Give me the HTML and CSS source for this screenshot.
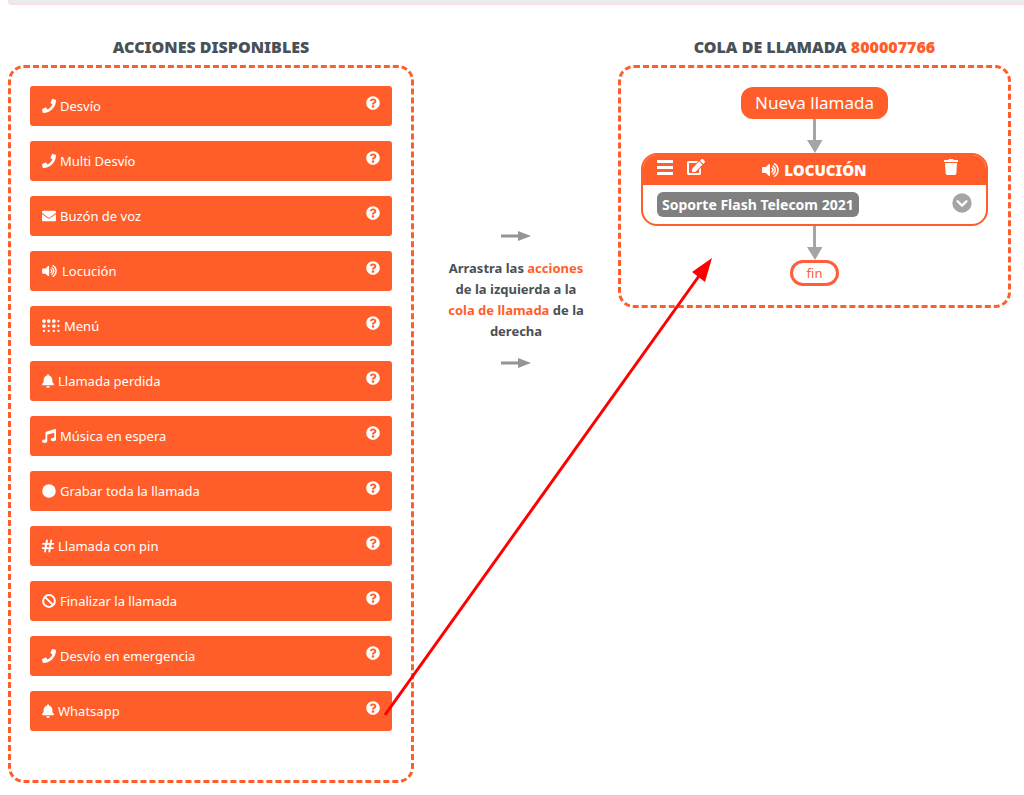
FILE: index.html
```html
<!DOCTYPE html>
<html lang="es">
<head>
<meta charset="utf-8">
<meta name="viewport" content="width=device-width, initial-scale=1">
<title>Cola de llamada</title>
<link rel="stylesheet" href="styles.css">
</head>
<body>
<svg class="sprite" aria-hidden="true">
  <symbol id="phone" viewBox="0 0 512 512"><path d="M493.4 24.6l-104-24c-11.3-2.6-22.9 3.3-27.5 13.9l-48 112c-4.2 9.8-1.4 21.3 6.9 28l60.6 49.6c-36 76.7-98.9 140.5-177.2 177.2l-49.6-60.6c-6.8-8.3-18.2-11.1-28-6.9l-112 48C3.9 366.5-2 378.1.6 389.4l24 104C27.1 504.2 36.7 512 48 512c256.1 0 464-207.5 464-464 0-11.2-7.7-20.9-18.6-23.4z"/></symbol>
  <symbol id="envelope" viewBox="0 0 512 512"><path d="M502.3 190.8c3.9-3.1 9.7-.2 9.7 4.7V400c0 26.5-21.5 48-48 48H48c-26.5 0-48-21.5-48-48V195.6c0-5 5.7-7.8 9.7-4.7 22.4 17.4 52.1 39.5 154.1 113.6 21.1 15.4 56.7 47.8 92.2 47.6 35.7.3 72-32.8 92.3-47.6 102-74.1 131.6-96.3 154-113.7zM256 320c23.2.4 56.6-29.2 73.4-41.4 132.7-96.3 142.8-104.7 173.4-128.7 5.8-4.5 9.2-11.5 9.2-18.9v-19c0-26.5-21.5-48-48-48H48c-26.5 0-48 21.5-48 48v19c0 7.4 3.4 14.3 9.2 18.9 30.6 23.9 40.7 32.4 173.4 128.7 16.8 12.2 50.2 41.8 73.4 41.4z"/></symbol>
  <symbol id="volume" viewBox="0 0 576 512"><path d="M215 71l-89 89H24c-13.300 0-24 10.700-24 24v144c0 13.300 10.700 24 24 24h102l89 89c15 15 41 4.500 41-17V88c0-21.500-26-32-41-17z"/><path d="M322 200c42 24 42 88 0 112M356 129c92 56 92 198 0 254M400 59c147 90 147 304 0 394" fill="none" stroke="currentColor" stroke-width="50" stroke-linecap="round"/></symbol>
  <symbol id="braille" viewBox="0 0 640 512"><circle cx="64" cy="76" r="68"/><circle cx="64" cy="256" r="68"/><circle cx="64" cy="436" r="42"/><circle cx="236" cy="76" r="68"/><circle cx="236" cy="256" r="42"/><circle cx="236" cy="436" r="42"/><circle cx="424" cy="76" r="68"/><circle cx="424" cy="256" r="68"/><circle cx="424" cy="436" r="42"/><circle cx="590" cy="76" r="42"/><circle cx="590" cy="256" r="42"/><circle cx="590" cy="436" r="42"/></symbol>
  <symbol id="bell" viewBox="0 0 448 512"><path d="M224 512c35.320 0 63.970-28.650 63.970-64H160.030c0 35.350 28.650 64 63.970 64zm215.390-149.710c-19.320-20.760-55.470-51.990-55.470-154.290 0-77.700-54.480-139.900-127.940-155.160V32c0-17.670-14.320-32-31.980-32s-31.980 14.330-31.980 32v20.840C118.560 68.100 64.080 130.300 64.080 208c0 102.300-36.150 133.530-55.470 154.290-6 6.450-8.660 14.160-8.610 21.710.11 16.400 12.980 32 32.100 32h383.800c19.120 0 32-15.600 32.100-32 .05-7.550-2.610-15.270-8.610-21.710z"/></symbol>
  <symbol id="music" viewBox="0 0 512 512"><path d="M511.990 32.010c0-21.710-21.100-37.010-41.600-30.510L150.400 96c-13.300 4.200-22.400 16.500-22.400 30.500v261.420c-10.050-2.380-20.720-3.920-32-3.920-53.020 0-96 28.650-96 64s42.980 64 96 64 96-28.650 96-64V214.310l256-75.020v184.630c-10.050-2.380-20.720-3.920-32-3.920-53.020 0-96 28.650-96 64s42.980 64 96 64 96-28.650 96-64z"/></symbol>
  <symbol id="circle" viewBox="0 0 512 512"><circle cx="256" cy="256" r="248"/></symbol>
  <symbol id="hashtag" viewBox="0 0 448 512"><path d="M184 52L112 460M344 52L272 460M42 176H428M20 336H406" fill="none" stroke="currentColor" stroke-width="72" stroke-linecap="round"/></symbol>
  <symbol id="ban" viewBox="0 0 512 512"><path d="M256 40a216 216 0 1 0 0 432a216 216 0 1 0 0-432zM104 104L408 408" fill="none" stroke="currentColor" stroke-width="72"/></symbol>
  <symbol id="question" viewBox="0 0 512 512"><path d="M504 256c0 136.997-111.043 248-248 248S8 392.997 8 256C8 119.083 119.043 8 256 8s248 111.083 248 248zM262.655 90c-54.497 0-89.255 22.957-116.549 63.758-3.536 5.286-2.353 12.415 2.715 16.258l34.699 26.310c5.205 3.947 12.621 3.008 16.665-2.122 17.864-22.658 30.113-35.797 57.303-35.797 20.429 0 45.698 13.148 45.698 32.958 0 14.976-12.363 22.667-32.534 33.976C247.128 238.528 216 254.941 216 296v4c0 6.627 5.373 12 12 12h56c6.627 0 12-5.373 12-12v-1.333c0-28.462 83.186-29.647 83.186-106.667 0-58.002-60.165-102-116.531-102zM256 338c-25.365 0-46 20.635-46 46 0 25.364 20.635 46 46 46s46-20.636 46-46c0-25.365-20.635-46-46-46z"/></symbol>
  <symbol id="bars" viewBox="0 0 16 16"><path d="M0 1H16V4H0zM0 7H16V10H0zM0 13H16V16H0z"/></symbol>
  <symbol id="edit" viewBox="0 0 576 512"><path d="M402.600 83.200l90.200 90.200c3.800 3.800 3.800 10 0 13.800L274.400 405.600l-92.800 10.300c-12.400 1.400-22.900-9.100-21.500-21.500l10.300-92.800L388.800 83.200c3.800-3.800 10-3.800 13.800 0zm162-22.900l-48.800-48.800c-15.200-15.200-39.900-15.200-55.200 0l-35.400 35.400c-3.800 3.800-3.800 10 0 13.800l90.200 90.200c3.800 3.800 10 3.800 13.800 0l35.400-35.400c15.200-15.300 15.200-40 0-55.200zM384 346.200V448H64V128h229.800c3.200 0 6.200-1.300 8.500-3.500l40-40c7.600-7.600 2.200-20.500-8.500-20.500H48C21.500 64 0 85.500 0 112v352c0 26.500 21.500 48 48 48h352c26.500 0 48-21.500 48-48V306.200c0-10.700-12.900-16-20.500-8.500l-40 40c-2.200 2.300-3.500 5.300-3.500 8.500z"/></symbol>
  <symbol id="trash" viewBox="0 0 448 512"><path d="M432 32H312l-9.400-18.700A24 24 0 0 0 281.100 0H166.800a23.720 23.720 0 0 0-21.400 13.300L136 32H16A16 16 0 0 0 0 48v32a16 16 0 0 0 16 16h416a16 16 0 0 0 16-16V48a16 16 0 0 0-16-16zM53.200 467a48 48 0 0 0 47.900 45h245.800a48 48 0 0 0 47.900-45L416 128H32z"/></symbol>
  <symbol id="chevron" viewBox="0 0 512 512"><circle cx="256" cy="256" r="248"/><path d="M142 212L256 322L370 212" fill="none" stroke="#fff" stroke-width="60" stroke-linecap="round" stroke-linejoin="round"/></symbol>
  <symbol id="arrow-right" viewBox="0 0 30 12"><path d="M0 4.500H17V1L30 6L17 11V7.500H0z"/></symbol>
  <symbol id="arrow-down" viewBox="0 0 16 34"><path d="M6 0H9V21H15.500L8 34L0 21H6z"/></symbol>
</svg>

<div class="notice"></div>
<main class="board">
  <section class="column">
    <h2 class="title">ACCIONES DISPONIBLES</h2>
    <ul class="panel actions">
      <li class="action"><svg class="icon"><use href="#phone"/></svg><span>Desvío</span><button class="help" aria-label="Ayuda"><svg class="icon"><use href="#question"/></svg></button></li>
      <li class="action"><svg class="icon"><use href="#phone"/></svg><span>Multi Desvío</span><button class="help" aria-label="Ayuda"><svg class="icon"><use href="#question"/></svg></button></li>
      <li class="action"><svg class="icon"><use href="#envelope"/></svg><span>Buzón de voz</span><button class="help" aria-label="Ayuda"><svg class="icon"><use href="#question"/></svg></button></li>
      <li class="action"><svg class="icon icon-wide"><use href="#volume"/></svg><span>Locución</span><button class="help" aria-label="Ayuda"><svg class="icon"><use href="#question"/></svg></button></li>
      <li class="action"><svg class="icon icon-wider"><use href="#braille"/></svg><span>Menú</span><button class="help" aria-label="Ayuda"><svg class="icon"><use href="#question"/></svg></button></li>
      <li class="action"><svg class="icon icon-narrow"><use href="#bell"/></svg><span>Llamada perdida</span><button class="help" aria-label="Ayuda"><svg class="icon"><use href="#question"/></svg></button></li>
      <li class="action"><svg class="icon"><use href="#music"/></svg><span>Música en espera</span><button class="help" aria-label="Ayuda"><svg class="icon"><use href="#question"/></svg></button></li>
      <li class="action"><svg class="icon"><use href="#circle"/></svg><span>Grabar toda la llamada</span><button class="help" aria-label="Ayuda"><svg class="icon"><use href="#question"/></svg></button></li>
      <li class="action"><svg class="icon icon-narrow"><use href="#hashtag"/></svg><span>Llamada con pin</span><button class="help" aria-label="Ayuda"><svg class="icon"><use href="#question"/></svg></button></li>
      <li class="action"><svg class="icon"><use href="#ban"/></svg><span>Finalizar la llamada</span><button class="help" aria-label="Ayuda"><svg class="icon"><use href="#question"/></svg></button></li>
      <li class="action"><svg class="icon"><use href="#phone"/></svg><span>Desvío en emergencia</span><button class="help" aria-label="Ayuda"><svg class="icon"><use href="#question"/></svg></button></li>
      <li class="action"><svg class="icon icon-narrow"><use href="#bell"/></svg><span>Whatsapp</span><button class="help" aria-label="Ayuda"><svg class="icon"><use href="#question"/></svg></button></li>
    </ul>
  </section>

  <aside class="hint">
    <svg class="hint-arrow" aria-hidden="true"><use href="#arrow-right"/></svg>
    <p class="hint-text">Arrastra las <em class="accent">acciones</em> de la izquierda a la <em class="accent">cola de llamada</em> de la derecha</p>
    <svg class="hint-arrow" aria-hidden="true"><use href="#arrow-right"/></svg>
  </aside>

  <section class="column">
    <h2 class="title">COLA DE LLAMADA <span class="accent">800007766</span></h2>
    <div class="panel queue">
      <div class="start">Nueva llamada</div>
      <svg class="flow-arrow" aria-hidden="true"><use href="#arrow-down"/></svg>
      <article class="step">
        <header class="step-head">
          <div class="step-tools">
            <button class="tool" aria-label="Mover"><svg class="bars-icon"><use href="#bars"/></svg></button>
            <button class="tool" aria-label="Editar"><svg class="edit-icon"><use href="#edit"/></svg></button>
          </div>
          <h3 class="step-title"><svg class="step-icon"><use href="#volume"/></svg>LOCUCIÓN</h3>
          <button class="tool tool-end" aria-label="Eliminar"><svg class="trash-icon"><use href="#trash"/></svg></button>
        </header>
        <div class="step-body">
          <span class="tag">Soporte Flash Telecom 2021</span>
          <button class="expand" aria-label="Desplegar"><svg class="expand-icon"><use href="#chevron"/></svg></button>
        </div>
      </article>
      <svg class="flow-arrow" aria-hidden="true"><use href="#arrow-down"/></svg>
      <div class="end">fin</div>
    </div>
  </section>
</main>
<svg class="pointer" viewBox="0 0 328 458" aria-hidden="true"><path class="pointer-line" d="M1 457L315 18"/><path class="pointer-head" d="M328 0L308 14L321 24z"/></svg>
</body>
</html>
```
FILE: styles.css
```css
* {
  box-sizing: border-box;
}

body {
  position: relative;
  margin: 0;
  background: #fff;
  color: #495057;
  font-family: "Noto Sans", "Open Sans", sans-serif;
  font-size: 13px;
}

svg {
  display: block;
  flex: none;
  fill: currentColor;
}

button {
  margin: 0;
  padding: 0;
  border: 0;
  background: none;
  color: inherit;
  cursor: pointer;
}

.sprite {
  position: absolute;
  width: 0;
  height: 0;
}

.notice {
  height: 5px;
  margin-left: 8px;
  border: solid #fbdcd8;
  border-width: 0 0 1px 1px;
  border-radius: 0 0 0 4px;
  background: #e9ecef;
}

.board {
  display: grid;
  grid-template-columns: 406fr 204fr 393fr;
  align-items: start;
  padding: 32px 13px 12px 8px;
}

.title {
  margin: 0 0 8px;
  font-size: 16px;
  font-weight: 900;
  line-height: 20px;
  text-align: center;
}

.accent {
  color: #ff5e2a;
  font-style: normal;
}

.panel {
  margin: 0;
  border: 3px dashed #ff5e2a;
  border-radius: 16px;
}

.actions {
  display: flex;
  flex-direction: column;
  gap: 15px;
  padding: 18px 19px 49px;
  list-style: none;
}

.action {
  display: flex;
  align-items: center;
  gap: 4px;
  height: 40px;
  padding: 0 12px;
  border-radius: 3px;
  background: #ff5e2a;
  color: #fff;
}

.icon {
  width: 14px;
  height: 14px;
}

.icon-narrow {
  width: 12px;
}

.icon-wide {
  width: 16px;
}

.icon-wider {
  width: 18px;
}

.help {
  align-self: flex-start;
  margin: 10px 0 0 auto;
}

.hint {
  display: flex;
  flex-direction: column;
  align-items: center;
  padding: 193px 32px 0;
}

.hint-arrow {
  width: 30px;
  height: 12px;
  color: #959595;
}

.hint-text {
  margin: 16px 0 15px;
  font-weight: 700;
  font-size: 13px;
  line-height: 21px;
  text-align: center;
}

.queue {
  display: flex;
  flex-direction: column;
  align-items: center;
  padding: 19px 20px 19px;
}

.start {
  padding: 0 14px;
  border-radius: 12px;
  background: #ff5e2a;
  color: #fff;
  font-size: 17px;
  line-height: 32px;
}

.flow-arrow {
  width: 16px;
  height: 34px;
  color: #a5a5a5;
}

.step {
  width: 100%;
  border: 2px solid #ff5e2a;
  border-radius: 16px;
  overflow: hidden;
}

.step-head {
  display: grid;
  grid-template-columns: 1fr auto 1fr;
  height: 30px;
  padding: 0 14px;
  background: #ff5e2a;
  color: #fff;
}

.step-tools {
  display: flex;
  gap: 14px;
}

.tool {
  align-self: start;
  padding-top: 4px;
}

.tool-end {
  justify-self: end;
  margin-right: 14px;
}

.bars-icon {
  width: 16px;
  height: 16px;
}

.edit-icon {
  width: 18px;
  height: 16px;
}

.trash-icon {
  width: 14px;
  height: 16px;
}

.step-title {
  display: flex;
  align-items: center;
  gap: 4px;
  margin: 0;
  font-size: 15px;
  font-weight: 900;
}

.step-icon {
  width: 18px;
  height: 16px;
}

.step-body {
  display: flex;
  align-items: center;
  justify-content: space-between;
  height: 39px;
  padding: 0 14px;
}

.tag {
  padding: 0 5px;
  border-radius: 6px;
  background: #808080;
  color: #fff;
  font-size: 14px;
  font-weight: 700;
  line-height: 25px;
}

.expand {
  align-self: flex-start;
  padding-top: 8px;
  color: #a5a5a5;
}

.expand-icon {
  width: 20px;
  height: 20px;
}

.end {
  padding: 0 14px;
  border: 3px solid #ff5e3c;
  border-radius: 13px;
  color: #ff5e3c;
  font-size: 13px;
  line-height: 20px;
}

/* Drag direction drawn over the board */
.pointer {
  position: absolute;
  top: 258px;
  left: 384px;
  width: 328px;
  height: 458px;
  pointer-events: none;
}

.pointer-line {
  fill: none;
  stroke: #f00;
  stroke-width: 3;
}

.pointer-head {
  fill: #f00;
}
```
